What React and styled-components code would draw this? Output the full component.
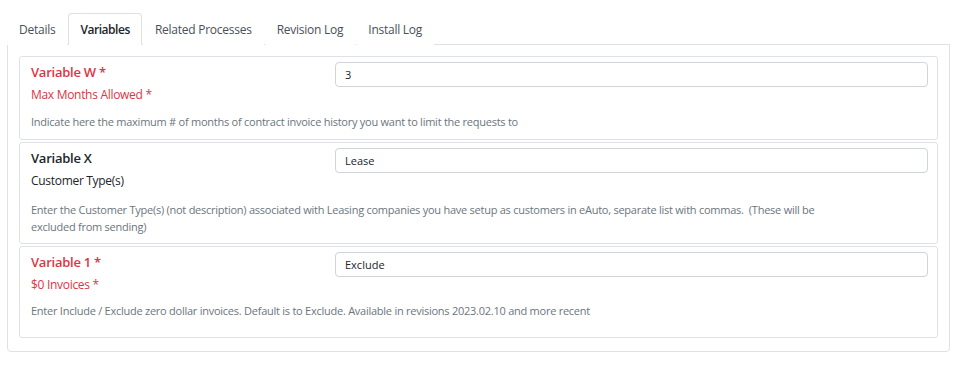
import React from 'react';
import styled, { createGlobalStyle } from 'styled-components';

const GlobalStyle = createGlobalStyle`
  body {
    margin: 0;
    background: #fff;
    font-family: "Open Sans", "Noto Sans", sans-serif;
    color: #212529;
  }
`;

const Page = styled.div`
  padding: 13px 14px 0 7px;
`;

const TabList = styled.div`
  display: flex;
  gap: 1px;
`;

const Tab = styled.div`
  padding: 0 11px;
  height: 32px;
  line-height: 31px;
  font-size: 12px;
  letter-spacing: ${props => (props.active ? '-0.45px' : '-0.25px')};
  color: ${props => (props.active ? '#212529' : '#495057')};
  font-weight: ${props => (props.active ? 600 : 400)};
  border: 1px solid ${props => (props.active ? '#dee2e6' : 'transparent')};
  border-bottom-color: ${props => (props.active ? '#fff' : 'transparent')};
  border-radius: 4px 4px 0 0;
  background: #fff;
  margin-bottom: -1px;
  position: relative;
  box-sizing: border-box;
`;

const Panel = styled.div`
  border: 1px solid #dee2e6;
  border-radius: 0 0 4px 4px;
  padding: 11px 11px 13px 11px;
`;

const Card = styled.div`
  border: 1px solid #dee2e6;
  border-radius: 3px;
  padding: 5px 9px ${props => props.bottom}px 11px;
  & + & {
    margin-top: 2px;
  }
`;

const Row = styled.div`
  display: grid;
  grid-template-columns: 304px 1fr;
`;

const Title = styled.div`
  font-size: 13px;
  font-weight: 600;
  line-height: 18px;
  margin-top: 1px;
  letter-spacing: -0.25px;
  color: ${props => (props.required ? '#dc3545' : '#212529')};
`;

const Subtitle = styled.div`
  font-size: 12px;
  line-height: 18px;
  margin-top: 5px;
  letter-spacing: -0.3px;
  color: ${props => (props.required ? '#dc3545' : '#212529')};
`;

const Input = styled.input`
  height: 25px;
  box-sizing: border-box;
  border: 1px solid #ced4da;
  border-radius: 4px;
  padding: 0 9px;
  font-family: inherit;
  font-size: 11px;
  color: #212529;
  outline: none;
  width: 100%;
`;

const Description = styled.div`
  margin-top: ${props => props.gap}px;
  max-width: 815px;
  font-size: 11px;
  line-height: 17px;
  letter-spacing: -0.25px;
  color: #6c757d;
  white-space: pre-wrap;
`;

const variables = [
  {
    name: 'Variable W',
    label: 'Max Months Allowed',
    required: true,
    value: '3',
    description: 'Indicate here the maximum # of months of contract invoice history you want to limit the requests to',
    gap: 9,
    bottom: 9,
  },
  {
    name: 'Variable X',
    label: 'Customer Type(s)',
    required: false,
    value: 'Lease',
    description:
      'Enter the Customer Type(s) (not description) associated with Leasing companies you have setup as customers in eAuto, separate list with commas.  (These will be excluded from sending)',
    gap: 11,
    bottom: 8,
  },
  {
    name: 'Variable 1',
    label: '$0 Invoices',
    required: true,
    value: 'Exclude',
    description:
      'Enter Include / Exclude zero dollar invoices. Default is to Exclude. Available in revisions 2023.02.10 and more recent',
    gap: 8,
    bottom: 18,
  },
];

const tabs = ['Details', 'Variables', 'Related Processes', 'Revision Log', 'Install Log'];

export default function App() {
  return (
    <Page>
      <GlobalStyle />
      <TabList>
        {tabs.map(tab => (
          <Tab key={tab} active={tab === 'Variables'}>
            {tab}
          </Tab>
        ))}
      </TabList>
      <Panel>
        {variables.map(v => (
          <Card key={v.name} bottom={v.bottom}>
            <Row>
              <div>
                <Title required={v.required}>
                  {v.name}
                  {v.required ? ' *' : ''}
                </Title>
                <Subtitle required={v.required}>
                  {v.label}
                  {v.required ? ' *' : ''}
                </Subtitle>
              </div>
              <Input defaultValue={v.value} />
            </Row>
            <Description gap={v.gap}>{v.description}</Description>
          </Card>
        ))}
      </Panel>
    </Page>
  );
}
